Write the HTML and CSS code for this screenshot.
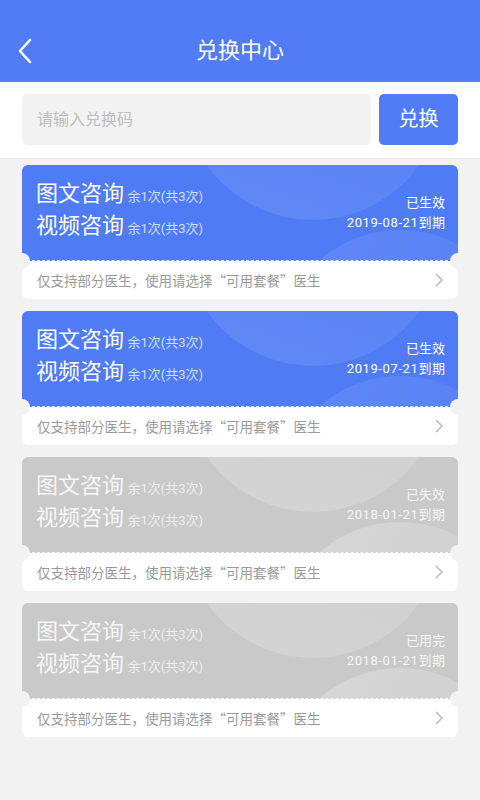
FILE: index.html
```html
<!DOCTYPE html>
<html lang="zh">
<head>
  <meta charset="UTF-8">
  <meta name="viewport" content="width=device-width, initial-scale=1.0">
  <title>兑换中心</title>
  <link rel="stylesheet" href="styles.css">
</head>
<body>
  <div class="header">
    <div class="back">
      <svg viewBox="0 0 16 26" width="16" height="26">
        <polyline points="13,2 3,13 13,24" fill="none" stroke="#fff" stroke-width="2.6" stroke-linecap="round" stroke-linejoin="round"/>
      </svg>
    </div>
    <h1>兑换中心</h1>
  </div>

  <div class="search">
    <div class="search-input">请输入兑换码</div>
    <div class="search-btn">兑换</div>
  </div>

  <div class="list">
    <div class="card">
      <div class="card-top">
        <div class="circle circle-big"></div>
        <div class="circle circle-small"></div>
        <div class="card-left">
          <div class="item">图文咨询 <span>余1次(共3次)</span></div>
          <div class="item">视频咨询 <span>余1次(共3次)</span></div>
        </div>
        <div class="card-right">
          <div>已生效</div>
          <div class="date">2019-08-21到期</div>
        </div>
      </div>
      <div class="card-bottom">
        <span>仅支持部分医生，使用请选择“可用套餐”医生</span>
        <svg viewBox="0 0 10 16" width="10" height="16"><polyline points="2,2 8,8 2,14" fill="none" stroke="#bbb" stroke-width="1.5"/></svg>
      </div>
    </div>

    <div class="card">
      <div class="card-top">
        <div class="circle circle-big"></div>
        <div class="circle circle-small"></div>
        <div class="card-left">
          <div class="item">图文咨询 <span>余1次(共3次)</span></div>
          <div class="item">视频咨询 <span>余1次(共3次)</span></div>
        </div>
        <div class="card-right">
          <div>已生效</div>
          <div class="date">2019-07-21到期</div>
        </div>
      </div>
      <div class="card-bottom">
        <span>仅支持部分医生，使用请选择“可用套餐”医生</span>
        <svg viewBox="0 0 10 16" width="10" height="16"><polyline points="2,2 8,8 2,14" fill="none" stroke="#bbb" stroke-width="1.5"/></svg>
      </div>
    </div>

    <div class="card disabled">
      <div class="card-top">
        <div class="circle circle-big"></div>
        <div class="circle circle-small"></div>
        <div class="card-left">
          <div class="item">图文咨询 <span>余1次(共3次)</span></div>
          <div class="item">视频咨询 <span>余1次(共3次)</span></div>
        </div>
        <div class="card-right">
          <div>已失效</div>
          <div class="date">2018-01-21到期</div>
        </div>
      </div>
      <div class="card-bottom">
        <span>仅支持部分医生，使用请选择“可用套餐”医生</span>
        <svg viewBox="0 0 10 16" width="10" height="16"><polyline points="2,2 8,8 2,14" fill="none" stroke="#bbb" stroke-width="1.5"/></svg>
      </div>
    </div>

    <div class="card disabled">
      <div class="card-top">
        <div class="circle circle-big"></div>
        <div class="circle circle-small"></div>
        <div class="card-left">
          <div class="item">图文咨询 <span>余1次(共3次)</span></div>
          <div class="item">视频咨询 <span>余1次(共3次)</span></div>
        </div>
        <div class="card-right">
          <div>已用完</div>
          <div class="date">2018-01-21到期</div>
        </div>
      </div>
      <div class="card-bottom">
        <span>仅支持部分医生，使用请选择“可用套餐”医生</span>
        <svg viewBox="0 0 10 16" width="10" height="16"><polyline points="2,2 8,8 2,14" fill="none" stroke="#bbb" stroke-width="1.5"/></svg>
      </div>
    </div>
  </div>
</body>
</html>
```

FILE: styles.css
```css
body {
  margin: 0;
  font-family: Roboto, "Noto Sans CJK SC", sans-serif;
  background-color: #f2f2f2;
  color: #333;
}

.header {
  position: relative;
  height: 82px;
  box-sizing: border-box;
  padding-top: 36px;
  background-color: #517cf6;
  text-align: center;
}

.header h1 {
  margin: 0;
  font-size: 22px;
  font-weight: normal;
  line-height: 30px;
  color: #fff;
}

.back {
  position: absolute;
  left: 17px;
  top: 38px;
}

.back svg {
  display: block;
}

.search {
  display: flex;
  gap: 8px;
  padding: 12px 22px 13px;
  background-color: #fff;
  border-bottom: 1px solid #ececec;
}

.search-input {
  flex: 1;
  height: 51px;
  line-height: 51px;
  padding-left: 15px;
  background-color: #f2f2f2;
  border-radius: 5px;
  font-size: 16px;
  color: #bdbdbd;
}

.search-btn {
  width: 79px;
  height: 51px;
  line-height: 51px;
  text-align: center;
  background-color: #517cf6;
  border-radius: 5px;
  font-size: 20px;
  color: #fff;
}

.list {
  display: flex;
  flex-direction: column;
  gap: 12px;
  padding: 6px 22px;
}

.card {
  position: relative;
}

.card::before,
.card::after {
  content: "";
  position: absolute;
  top: 88px;
  width: 16px;
  height: 16px;
  border-radius: 50%;
  background-color: #f2f2f2;
  z-index: 2;
}

.card::before {
  left: -8px;
}

.card::after {
  right: -8px;
}

.card-top {
  position: relative;
  display: flex;
  justify-content: space-between;
  height: 96px;
  box-sizing: border-box;
  padding: 13px 13px 0 14px;
  background-color: #4f7bf5;
  border-radius: 6px 6px 0 0;
  border-bottom: 1px dashed rgba(255, 255, 255, 0.85);
  overflow: hidden;
  color: #fff;
}

.circle {
  position: absolute;
  border-radius: 50%;
}

.circle-big {
  left: 161px;
  top: -205px;
  width: 260px;
  height: 260px;
  background: linear-gradient(200deg, rgba(255, 255, 255, 0.02), rgba(255, 255, 255, 0.1));
}

.circle-small {
  left: 256px;
  top: 65px;
  width: 244px;
  height: 244px;
  background: linear-gradient(120deg, rgba(255, 255, 255, 0.1), rgba(255, 255, 255, 0.02));
}

.card-left,
.card-right {
  position: relative;
}

.item {
  height: 32px;
  font-size: 22px;
  line-height: 32px;
}

.item span {
  margin-left: -2px;
  font-size: 13px;
  line-height: 1;
  color: rgba(255, 255, 255, 0.75);
}

.card-right {
  padding-top: 15px;
  text-align: right;
  font-size: 13px;
  line-height: 20px;
}

.date {
  letter-spacing: 0.6px;
  margin-right: -0.6px;
}

.card-bottom {
  display: flex;
  justify-content: space-between;
  align-items: center;
  height: 38px;
  padding: 0 14px 0 15px;
  background-color: #fff;
  border-radius: 0 0 6px 6px;
  font-family: "Noto Sans CJK SC", sans-serif;
  font-size: 13.5px;
  color: #9a9a9a;
}

.card-bottom svg {
  display: block;
}

.disabled .card-top {
  background-color: #c9c9c9;
  color: rgba(255, 255, 255, 0.85);
}

.disabled .circle-big {
  background: linear-gradient(200deg, rgba(255, 255, 255, 0.02), rgba(255, 255, 255, 0.22));
}

.disabled .circle-small {
  background: linear-gradient(120deg, rgba(255, 255, 255, 0.28), rgba(255, 255, 255, 0.03));
}

.disabled .item span {
  color: rgba(255, 255, 255, 0.7);
}
```
